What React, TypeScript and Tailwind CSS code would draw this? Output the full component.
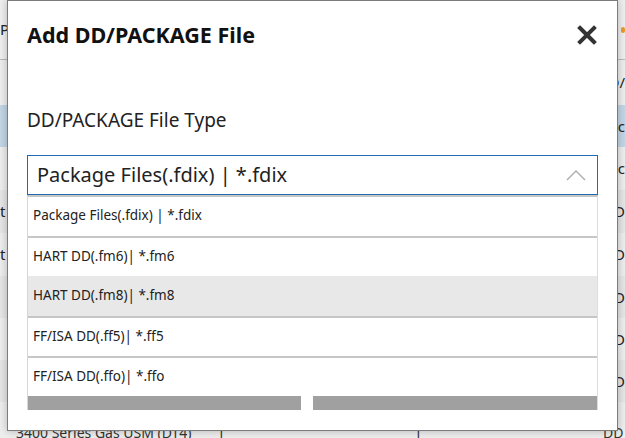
const font = { fontFamily: '"Noto Sans", "Open Sans", sans-serif' };

type Row = { h: string; bg: string; left: string; right: string };

const rows: Row[] = [
  { h: "h-[60px]", bg: "bg-[#efefef] border-b border-[#b9b9b9]", left: "Pa", right: "e" },
  { h: "h-[45px]", bg: "bg-[#eeeeee]", left: "", right: "D/" },
  { h: "h-[42px]", bg: "bg-[#c3d6e6]", left: "", right: "ac" },
  { h: "h-[43px]", bg: "bg-[#eeeeee]", left: "", right: "ac" },
  { h: "h-[43px]", bg: "bg-[#e6e6e6]", left: "t", right: "D" },
  { h: "h-[43px]", bg: "bg-[#eeeeee]", left: "t", right: "D" },
  { h: "h-[42px]", bg: "bg-[#e6e6e6]", left: "", right: "D" },
  { h: "h-[42px]", bg: "bg-[#eeeeee]", left: "", right: "D" },
  { h: "h-[42px]", bg: "bg-[#e6e6e6]", left: "", right: "D" },
];

const items = [
  { label: "Package Files(.fdix) | *.fdix", cls: "h-[41px] border-b-2 border-[#c6c6c6]" },
  { label: "HART DD(.fm6)| *.fm6", cls: "h-[38px]" },
  { label: "HART DD(.fm8)| *.fm8", cls: "h-[42px] bg-[#e8e8e8] border-b-2 border-[#c6c6c6]" },
  { label: "FF/ISA DD(.ff5)| *.ff5", cls: "h-[40px] border-b-2 border-[#c6c6c6]" },
  { label: "FF/ISA DD(.ffo)| *.ffo", cls: "h-[38px]" },
];

function Background() {
  return (
    <div className="flex flex-col text-[15px] text-[#222]">
      {rows.map((r, i) => (
        <div key={i} className={`flex items-center justify-between ${r.h} ${r.bg}`}>
          <span className="w-[8px] overflow-hidden whitespace-nowrap">{r.left}</span>
          <span className="flex items-center gap-1 whitespace-nowrap">
            {r.right}
            {i === 0 && <span className="w-[4px] h-[6px] bg-[#e89a2c] rounded-full" />}
          </span>
        </div>
      ))}
      <div className="flex items-start h-[40px] bg-[#eeeeee] text-[14px] text-[#333] pt-[20px]">
        <span className="ml-[16px] w-[201px] whitespace-nowrap">3400 Series Gas USM (DT4)</span>
        <span className="w-[197px]">1</span>
        <span className="w-[189px]">1</span>
        <span>DD</span>
      </div>
    </div>
  );
}

export default function App() {
  return (
    <div className="relative w-[625px] h-[438px] overflow-hidden bg-[#ececec]" style={font}>
      <Background />

      {/* Dialog */}
      <div className="absolute left-[7px] top-0 w-[611px] h-[431px] bg-white border border-[#7c7c7c] shadow-[0_0_8px_rgba(0,0,0,0.25)] flex flex-col px-[19px]">
        <div className="flex items-center justify-between h-[40px] mt-[14px]">
          <h1 className="text-[21.5px] font-bold text-[#111]">Add DD/PACKAGE File</h1>
          <svg width="20" height="20" viewBox="0 0 20 20" className="mr-[1px]">
            <path d="M3 3 L17 17 M17 3 L3 17" stroke="#333" strokeWidth="4" strokeLinecap="square" />
          </svg>
        </div>

        <div className="mt-[51px] h-[28px] flex items-center text-[19px] text-[#222]">
          DD/PACKAGE File Type
        </div>

        <div className="mt-[21px] h-[40px] border border-[#1f6bb0] flex items-center justify-between pl-[9px] pr-[11px]">
          <span className="text-[20px] text-[#222]">Package Files(.fdix) | *.fdix</span>
          <svg width="20" height="11" viewBox="0 0 20 11">
            <path d="M1 10 L10 1 L19 10" fill="none" stroke="#ababab" strokeWidth="1.3" />
          </svg>
        </div>

        <div className="flex flex-col border-t-2 border-x border-[#c6c6c6] border-r-[#dcdcdc] border-l-[#d6d6d6]">
          {items.map((it) => (
            <div key={it.label} className={`flex items-center pl-[5px] pb-[2px] text-[13.5px] text-[#222] ${it.cls}`}>
              {it.label}
            </div>
          ))}
          <div className="flex h-[14px] gap-[12px] bg-white">
            <div className="w-[273px] bg-[#a0a0a0]" />
            <div className="flex-1 bg-[#a0a0a0]" />
          </div>
        </div>
      </div>
    </div>
  );
}
